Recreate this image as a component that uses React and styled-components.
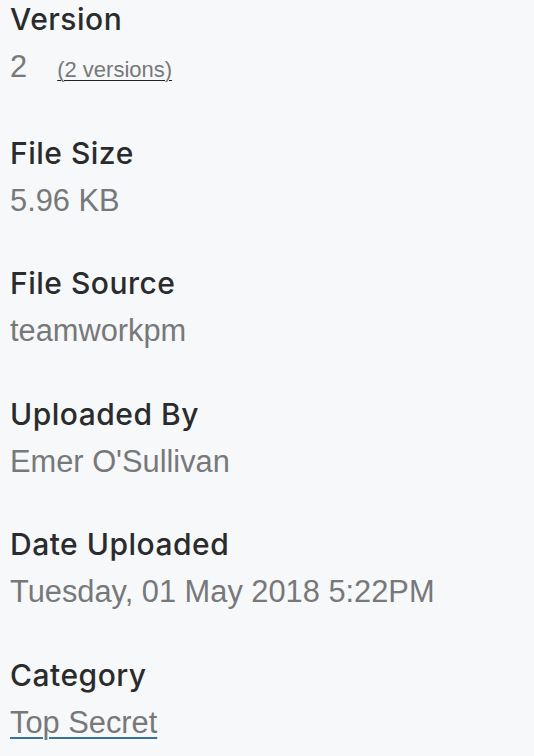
import React from "react";
import styled, { createGlobalStyle } from "styled-components";

const Global = createGlobalStyle`
  html, body { margin: 0; padding: 0; background: #f7f8fa; }
  body { width: 534px; height: 756px; overflow: hidden; }
`;

const Panel = styled.div`
  display: flex;
  flex-direction: column;
  padding: 0 0 0 10px;
  background: #f7f8fa;
  min-height: 756px;
  box-sizing: border-box;
`;

const Section = styled.div`
  display: flex;
  flex-direction: column;
  margin-bottom: 42.6px;
`;

const Label = styled.div`
  font-family: Inter, "Open Sans", sans-serif;
  font-size: 30px;
  font-weight: 500;
  letter-spacing: 0.5px;
  line-height: 36px;
  color: #2a2b2d;
  margin-top: 1px;
`;

const Value = styled.div`
  display: flex;
  align-items: baseline;
  gap: 30px;
  font-family: "Liberation Sans", Arial, sans-serif;
  font-size: 30.8px;
  line-height: 42px;
  margin-top: 9px;
  color: #77787a;
`;

const Link = styled.a`
  color: #77787a;
  font-size: ${(p) => (p.$small ? "22px" : "30.8px")};
  text-decoration: underline;
  text-decoration-color: ${(p) => p.$line};
  text-underline-offset: ${(p) => (p.$small ? "3px" : "4px")};
  text-decoration-thickness: ${(p) => (p.$small ? "1px" : "2px")};
`;

const rows = [
  { label: "Version", value: "2", extra: "(2 versions)" },
  { label: "File Size", value: "5.96 KB" },
  { label: "File Source", value: "teamworkpm" },
  { label: "Uploaded By", value: "Emer O'Sullivan" },
  { label: "Date Uploaded", value: "Tuesday, 01 May 2018 5:22PM" },
  { label: "Category", link: "Top Secret" },
];

export default function App() {
  return (
    <Panel>
      <Global />
      {rows.map((r) => (
        <Section key={r.label}>
          <Label>{r.label}</Label>
          <Value>
            {r.value && <span>{r.value}</span>}
            {r.extra && (
              <Link $small $line="#222">
                {r.extra}
              </Link>
            )}
            {r.link && <Link $line="#3a7099">{r.link}</Link>}
          </Value>
        </Section>
      ))}
    </Panel>
  );
}
